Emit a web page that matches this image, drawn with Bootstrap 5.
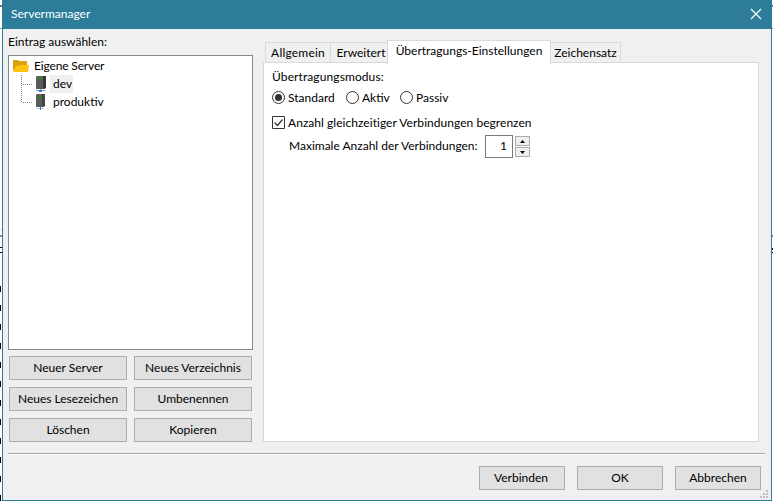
<!DOCTYPE html>
<html lang="de">
<head>
<meta charset="utf-8">
<title>Servermanager</title>
<link href="https://cdn.jsdelivr.net/npm/bootstrap@5.3.0/dist/css/bootstrap.min.css" rel="stylesheet">
<style>
body{width:773px;height:501px;overflow:hidden;font:12px/18px Lato,"Open Sans",sans-serif;color:#000;background:#fff}
.edge-l{width:2px;background:linear-gradient(#ddd,#ddd) 0 229px/2px 1px no-repeat,linear-gradient(#888,#888) 0 235px/2px 2px no-repeat,linear-gradient(#777,#777) 0 5px/2px 2px no-repeat,linear-gradient(#999,#999) 0 28px/2px 1px no-repeat,linear-gradient(#000,#000) 0 247px/2px 1px no-repeat,linear-gradient(#000,#000) 0 252px/2px 1px no-repeat}
.edge-l i{display:block;margin-top:286px;width:1px;height:215px;background:repeating-linear-gradient(#000 0 6px,#fff 6px 19px)}
.edge-r{width:1px;background:linear-gradient(#777,#777) 0 5px/1px 2px no-repeat,linear-gradient(#999,#999) 0 28px/1px 1px no-repeat,linear-gradient(#888,#888) 0 235px/1px 2px no-repeat,linear-gradient(#000,#000) 0 248px/1px 2px no-repeat,linear-gradient(#000,#000) 0 252px/1px 1px no-repeat}
.win{width:770px;height:501px;background:#f0f0f0;border:1px solid #2d7d9a;border-top:0}
.titlebar{height:29px;background:#2d7d9a;color:#fff;padding:0 9px 1px 8px}
.left{width:245px;margin-left:5px}
.caption{height:26px;padding-top:4px}
.tree{height:295px;background:#fff;border:1px solid #828790;padding:1px 4px}
.tree .node{height:18px}
.tree svg{display:block;flex:none}
.tree .root-label{margin-left:5px;letter-spacing:-.15px}
.tree .sel{background:#f0f0f0;width:23px;height:18px;padding-left:3px}
.b{border:1px solid #adadad;border-radius:0;background:#e1e1e1;color:#000;padding:0;height:24px;font-size:12px;line-height:22px}
.btns{display:grid;grid-template-columns:118px 118px;gap:7px;margin:6px 0 0 1px}
.right{width:496px;margin-left:10px}
.tabs{height:24px;margin:10px 0 -1px 2px;padding-top:1px}
.t{height:21px;border:1px solid #d9d9d9;line-height:19px;margin-top:2px;text-align:center;white-space:nowrap}
.t.on{height:24px;margin-top:0;margin-left:-1px;background:#fff;border-bottom:0;position:relative;line-height:20px}
.wide{letter-spacing:.2px}
.panel{height:380px;background:#fff;border:1px solid #d9d9d9;padding:5px 8px}
.opt{height:18px;margin-top:3px}
.opt+.opt{margin-top:7px}
.opt svg{margin-bottom:1px;flex:none}
.opt span{margin-left:3px}
.limit{margin:3px 0 0 17px}
.limit span{width:196px;padding-bottom:1px}
.spinbox{width:28px;height:23px;border:1px solid #7a7a7a;text-align:right;padding-right:5px;line-height:20px}
.sb{width:15px;height:10px;background:#eee;border:1px solid #adadad;display:flex;align-items:center;justify-content:center;padding:0}
.sep{height:2px;width:757px;margin:11px 0 0 5px;background:#fff;border-top:1px solid #a0a0a0}
.foot{padding:11px 10px 0 0;gap:12px}
.foot .b{width:86px}
.foot .b:first-child{padding-right:2px}
.grip{position:absolute;right:3px;bottom:2px}
</style>
<script src="https://cdn.jsdelivr.net/npm/bootstrap@5.3.0/dist/js/bootstrap.bundle.min.js"></script>
</head>
<body class="d-flex m-0">
<div class="edge-l flex-shrink-0"><i></i></div>
<main class="win position-relative flex-shrink-0">
 <header class="titlebar d-flex align-items-center justify-content-between"><span>Servermanager</span>
  <svg width="12" height="12" viewBox="0 0 12 12" stroke="#fff" stroke-width="1.2"><path d="M1 1l10 10M11 1L1 11"/></svg></header>
 <div class="d-flex">
  <section class="left flex-shrink-0">
   <div class="caption">Eintrag auswählen:</div>
   <div class="tree">
    <div class="node d-flex align-items-center"><svg width="16" height="14" viewBox="0 0 16 14"><path d="M0 1h5l1 1h8v9H0z" fill="#dda10f"/><path d="M0 13l3-6h3l1-1h9l-1 7z" fill="#ffc20e"/></svg><span class="root-label">Eigene Server</span></div>
    <div class="node d-flex"><svg width="37" height="18"><path d="M8.500 0v18M10 9.500h10" stroke="#888" stroke-dasharray="1 1"/><path d="M23 2l1-1h9v12l-2 1h-8z" fill="#5b5b5b"/><path d="M30 1h3v12l-3 1z" fill="#383838"/><path d="M25 3h5v1h-5z" fill="#16a01b"/><path d="M27.500 14v2M23 15.500h9" stroke="#999"/><path d="M26 15h3v2h-3z" fill="#1685ef"/></svg><span class="sel">dev</span></div>
    <div class="node d-flex"><svg width="40" height="18"><path d="M8.500 0v10M10 9.500h10" stroke="#888" stroke-dasharray="1 1"/><path d="M23 2l1-1h8v12l-2 1h-7z" fill="#5b5b5b"/><path d="M29 1h3v12l-3 1z" fill="#444"/><path d="M25 3h4v1h-4z" fill="#16a01b"/><path d="M24 15.500h7" stroke="#bbb"/><path d="M27 14h1v3h-1z" fill="#1685ef"/></svg><span>produktiv</span></div>
   </div>
   <div class="btns">
    <button class="btn b">Neuer Server</button><button class="btn b">Neues Verzeichnis</button>
    <button class="btn b">Neues Lesezeichen</button><button class="btn b">Umbenennen</button>
    <button class="btn b">Löschen</button><button class="btn b">Kopieren</button>
   </div>
  </section>
  <section class="right flex-shrink-0">
   <div class="tabs d-flex">
    <div class="t wide" style="width:66px">Allgemein</div><div class="t border-start-0 ps-1" style="width:57px">Erweitert</div><div class="t on" style="width:164px">Übertragungs-Einstellungen</div><div class="t border-start-0" style="width:70px">Zeichensatz</div>
   </div>
   <div class="panel">
    <div class="wide" style="letter-spacing:.1px">Übertragungsmodus:</div>
    <div class="opt d-flex align-items-center">
     <svg width="13" height="13"><circle cx="6.500" cy="6.500" r="6" fill="#fff" stroke="#333"/><circle cx="6.500" cy="6.500" r="3.500" fill="#333"/></svg><span style="width:58px">Standard</span>
     <svg width="13" height="13"><circle cx="6.500" cy="6.500" r="6" fill="#fff" stroke="#333"/></svg><span style="width:38px">Aktiv</span>
     <svg width="13" height="13"><circle cx="6.500" cy="6.500" r="6" fill="#fff" stroke="#333"/></svg><span>Passiv</span>
    </div>
    <div class="opt d-flex align-items-center"><svg width="13" height="13"><path d="M.5.5h12v12H.5z" fill="#fff" stroke="#333"/><path d="M2.500 6.500l3 3 5-6" fill="none" stroke="#333" stroke-width="1.200"/></svg><span style="letter-spacing:.04px">Anzahl gleichzeitiger Verbindungen begrenzen</span></div>
    <div class="limit d-flex align-items-center"><span>Maximale Anzahl der Verbindungen:</span><div class="spinbox">1</div>
     <div class="d-flex flex-column" style="gap:1px;margin-left:2px"><div class="sb"><svg width="5" height="3"><path d="M0 3h5L2.500 0z"/></svg></div><div class="sb"><svg width="5" height="3"><path d="M0 0h5L2.500 3z"/></svg></div></div></div>
   </div>
  </section>
 </div>
 <div class="sep"></div>
 <footer class="foot d-flex justify-content-end"><button class="btn b">Verbinden</button><button class="btn b">OK</button><button class="btn b">Abbrechen</button></footer>
 <svg class="grip" width="8" height="8" fill="#bfbfbf"><path d="M6 0h2v2H6zM3 3h2v2H3zM6 3h2v2H6zM0 6h2v2H0zM3 6h2v2H3zM6 6h2v2H6z"/></svg>
</main>
<div class="edge-r flex-shrink-0"></div>
</body>
</html>
